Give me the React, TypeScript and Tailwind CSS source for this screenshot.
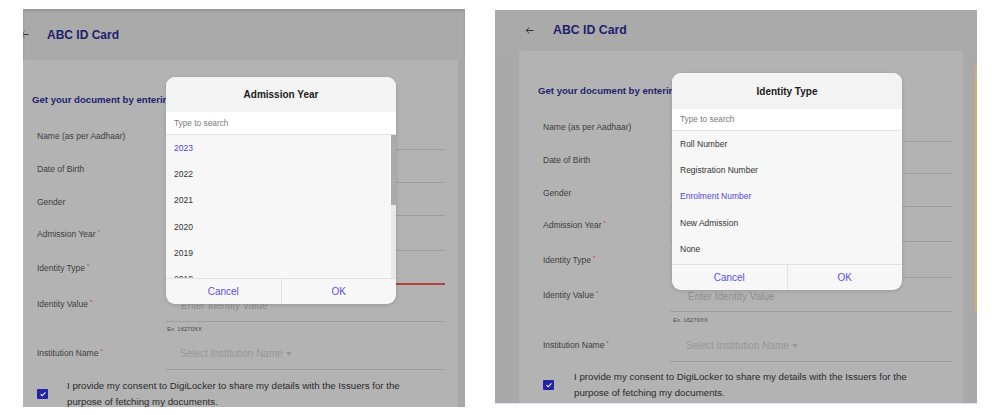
import React from "react";

type PickerProps = {
  box: string;
  title: string;
  titleH: string;
  searchH: string;
  listH: string;
  items: string[];
  active: number;
  scrollbar?: boolean;
};

function BackArrow({ className }: { className?: string }) {
  return (
    <svg viewBox="0 0 10 10" className={className} fill="none" stroke="currentColor" strokeWidth="1.1" strokeLinecap="round" strokeLinejoin="round">
      <path d="M9 5H1.4M4.4 2L1.4 5l3 3" />
    </svg>
  );
}

function Req() {
  return <span className="relative -top-[3px] ml-[2px] text-[6px] text-[#c2413b]">*</span>;
}

function Picker({ box, title, titleH, searchH, listH, items, active, scrollbar }: PickerProps) {
  return (
    <div className={`absolute w-[230px] overflow-hidden rounded-[9px] bg-[#f7f7f7] shadow-[0_1px_4px_rgba(0,0,0,0.15)] ${box}`}>
      <div className={`flex items-center justify-center bg-[#f3f3f3] text-[10px] font-bold text-[#1b1b1b] ${titleH}`}>{title}</div>
      <div className={`flex items-center border-b border-[#e3e3e3] bg-white pl-[8px] text-[8.3px] text-[#7a7a7a] ${searchH}`}>Type to search</div>
      <div className={`relative overflow-hidden ${listH}`}>
        {items.map((it, i) => (
          <div key={it} className={`flex h-[26.3px] items-center pl-[8px] text-[8.5px] ${i === active ? "text-[#4c47d9]" : "text-[#333333]"}`}>
            {it}
          </div>
        ))}
        {scrollbar && (
          <div className="absolute right-0 top-0 bottom-0 w-[5px] bg-[#e9e9e9]">
            <div className="h-[70px] w-[5px] bg-[#ababab]" />
          </div>
        )}
      </div>
      <div className="flex h-[26px] border-t border-[#e2e2e2] text-[10px] text-[#5a50e4]">
        <div className="flex flex-1 items-center justify-center">Cancel</div>
        <div className="flex flex-1 items-center justify-center border-l border-[#e2e2e2]">OK</div>
      </div>
    </div>
  );
}

type RowProps = {
  label: string;
  req?: boolean;
  h: string;
  col: string;
  pb: string;
  line?: string;
  children?: React.ReactNode;
};

function Row({ label, req, h, col, pb, line = "border-b border-[#9e9e9e]", children }: RowProps) {
  return (
    <div className={`flex items-end ${h}`}>
      <div className={`shrink-0 text-[8.5px] leading-[12px] text-[#3e3e3e] ${col} ${pb}`}>
        {label}
        {req && <Req />}
      </div>
      <div className={`flex h-full flex-1 items-end ${line}`}>{children}</div>
    </div>
  );
}

function Consent({ mt, textPl }: { mt: string; textPl: string }) {
  return (
    <div className={`flex items-center ${mt}`}>
      <div className="flex h-[10px] w-[11px] shrink-0 items-center justify-center rounded-[1px] bg-[#2323a6]">
        <svg viewBox="0 0 10 10" className="h-[8px] w-[8px]" fill="none" stroke="#ffffff" strokeWidth="1.3">
          <path d="M2 5.2l2 2L8 3" />
        </svg>
      </div>
      <div className={`text-[9.7px] leading-[16px] text-[#2a2a2a] ${textPl}`}>
        <div>I provide my consent to DigiLocker to share my details with the Issuers for the</div>
        <div>purpose of fetching my documents.</div>
      </div>
    </div>
  );
}

function Caret() {
  return (
    <svg viewBox="0 0 6 4" className="ml-[3px] h-[4px] w-[6px]" fill="#979797">
      <path d="M0 0h6L3 4z" />
    </svg>
  );
}

const years = ["2023", "2022", "2021", "2020", "2019", "2018"];
const idTypes = ["Roll Number", "Registration Number", "Enrolment Number", "New Admission", "None"];

export default function App() {
  return (
    <div className="relative h-[415px] w-[1000px] overflow-hidden bg-white font-['Liberation_Sans',Arial,sans-serif]">
      <div className="flex items-start">
        {/* first capture: year picker */}
        <div className="relative ml-[23px] mt-[9px] flex h-[398px] w-[442px] flex-col overflow-hidden bg-[#a7a7a7]">
          <div className="flex h-[51px] shrink-0 items-center bg-[#aaaaaa] shadow-[inset_0_2px_3px_rgba(0,0,0,0.12)]">
            <BackArrow className="-ml-[3px] h-[9px] w-[9px] text-[#333333]" />
            <span className="ml-[18px] text-[12px] font-bold text-[#1f1f6d]">ABC ID Card</span>
          </div>
          <div className="flex flex-1">
            <div className="flex w-[435px] flex-col bg-[#b3b3b3] pl-[14px] pr-[13px]">
              <div className="-ml-[5px] mt-[33px] w-[134px] overflow-hidden whitespace-nowrap text-[9.6px] font-bold leading-[14px] text-[#1f1f6d]">Get your document by entering</div>
              <Row label="Name (as per Aadhaar)" h="h-[43px]" col="w-[129px]" pb="pb-[8px]" />
              <Row label="Date of Birth" h="h-[33px]" col="w-[129px]" pb="pb-[8px]" />
              <Row label="Gender" h="h-[33px]" col="w-[129px]" pb="pb-[8px]" />
              <Row label="Admission Year" req h="h-[35px]" col="w-[129px]" pb="pb-[10px]" />
              <Row label="Identity Type" req h="h-[34px]" col="w-[129px]" pb="pb-[10px]" line="border-b-2 border-[#b0423f]" />
              <Row label="Identity Value" req h="h-[37px]" col="w-[129px]" pb="pb-[11px]">
                <span className="pb-[9px] pl-[15px] text-[10px] leading-[12px] text-[#8f8f8f]">Enter Identity Value</span>
              </Row>
              <div className="flex h-[14px] items-center pl-[130px] text-[6px] text-[#4a4a4a]">Ex. 16270XX</div>
              <Row label="Institution Name" req h="h-[34px]" col="w-[129px]" pb="pb-[10px]">
                <span className="flex items-center pb-[9px] pl-[14px] text-[10px] leading-[12px] text-[#979797]">
                  Select Institution Name
                  <Caret />
                </span>
              </Row>
              <Consent mt="mt-[8px]" textPl="pl-[19px]" />
            </div>
            <div className="flex-1 bg-[#a7a7a7]" />
          </div>
          <Picker
            box="left-[143px] top-[68px]"
            title="Admission Year"
            titleH="h-[35px]"
            searchH="h-[23px]"
            listH="h-[143px]"
            items={years}
            active={0}
            scrollbar
          />
        </div>

        {/* second capture: identity type picker */}
        <div className="relative ml-[30px] mt-[10px] flex h-[394px] w-[482px] flex-col overflow-hidden border-b border-[#dfe5ef] bg-[#a9a9a9]">
          <div className="flex h-[41px] shrink-0 items-center bg-[#aaaaaa]">
            <BackArrow className="ml-[30px] h-[9px] w-[9px] text-[#333333]" />
            <span className="ml-[19px] text-[12.3px] font-bold text-[#1f1f6d]">ABC ID Card</span>
          </div>
          <div className="flex flex-1">
            <div className="w-[24px] bg-[#a9a9a9]" />
            <div className="flex w-[444px] flex-col rounded-t-[3px] bg-[#b3b3b3] pl-[24px] pr-[11px]">
              <div className="-ml-[5px] mt-[33px] w-[134px] overflow-hidden whitespace-nowrap text-[9.6px] font-bold leading-[14px] text-[#1f1f6d]">Get your document by entering</div>
              <Row label="Name (as per Aadhaar)" h="h-[44px]" col="w-[127px]" pb="pb-[9px]" />
              <Row label="Date of Birth" h="h-[32px]" col="w-[127px]" pb="pb-[8px]" />
              <Row label="Gender" h="h-[33px]" col="w-[127px]" pb="pb-[8px]" />
              <Row label="Admission Year" req h="h-[35px]" col="w-[127px]" pb="pb-[10px]" />
              <Row label="Identity Type" req h="h-[36px]" col="w-[127px]" pb="pb-[11px]" />
              <Row label="Identity Value" req h="h-[34px]" col="w-[127px]" pb="pb-[10px]">
                <span className="pb-[8px] pl-[18px] text-[10px] leading-[12px] text-[#8f8f8f]">Enter Identity Value</span>
              </Row>
              <div className="flex h-[16px] items-center pl-[130px] text-[6px] text-[#4a4a4a]">Ex. 16270XX</div>
              <Row label="Institution Name" req h="h-[34px]" col="w-[127px]" pb="pb-[10px]">
                <span className="flex items-center pb-[9px] pl-[16px] text-[10px] leading-[12px] text-[#979797]">
                  Select Institution Name
                  <Caret />
                </span>
              </Row>
              <Consent mt="mt-[7px]" textPl="pl-[20px]" />
            </div>
            <div className="flex-1 bg-[#a9a9a9]" />
          </div>
          <div className="absolute right-0 top-[55px] h-[247px] w-[2px] bg-[#cdb067]" />
          <Picker
            box="left-[177px] top-[63px]"
            title="Identity Type"
            titleH="h-[36px]"
            searchH="h-[22px]"
            listH="h-[133px]"
            items={idTypes}
            active={2}
          />
        </div>
      </div>
    </div>
  );
}
